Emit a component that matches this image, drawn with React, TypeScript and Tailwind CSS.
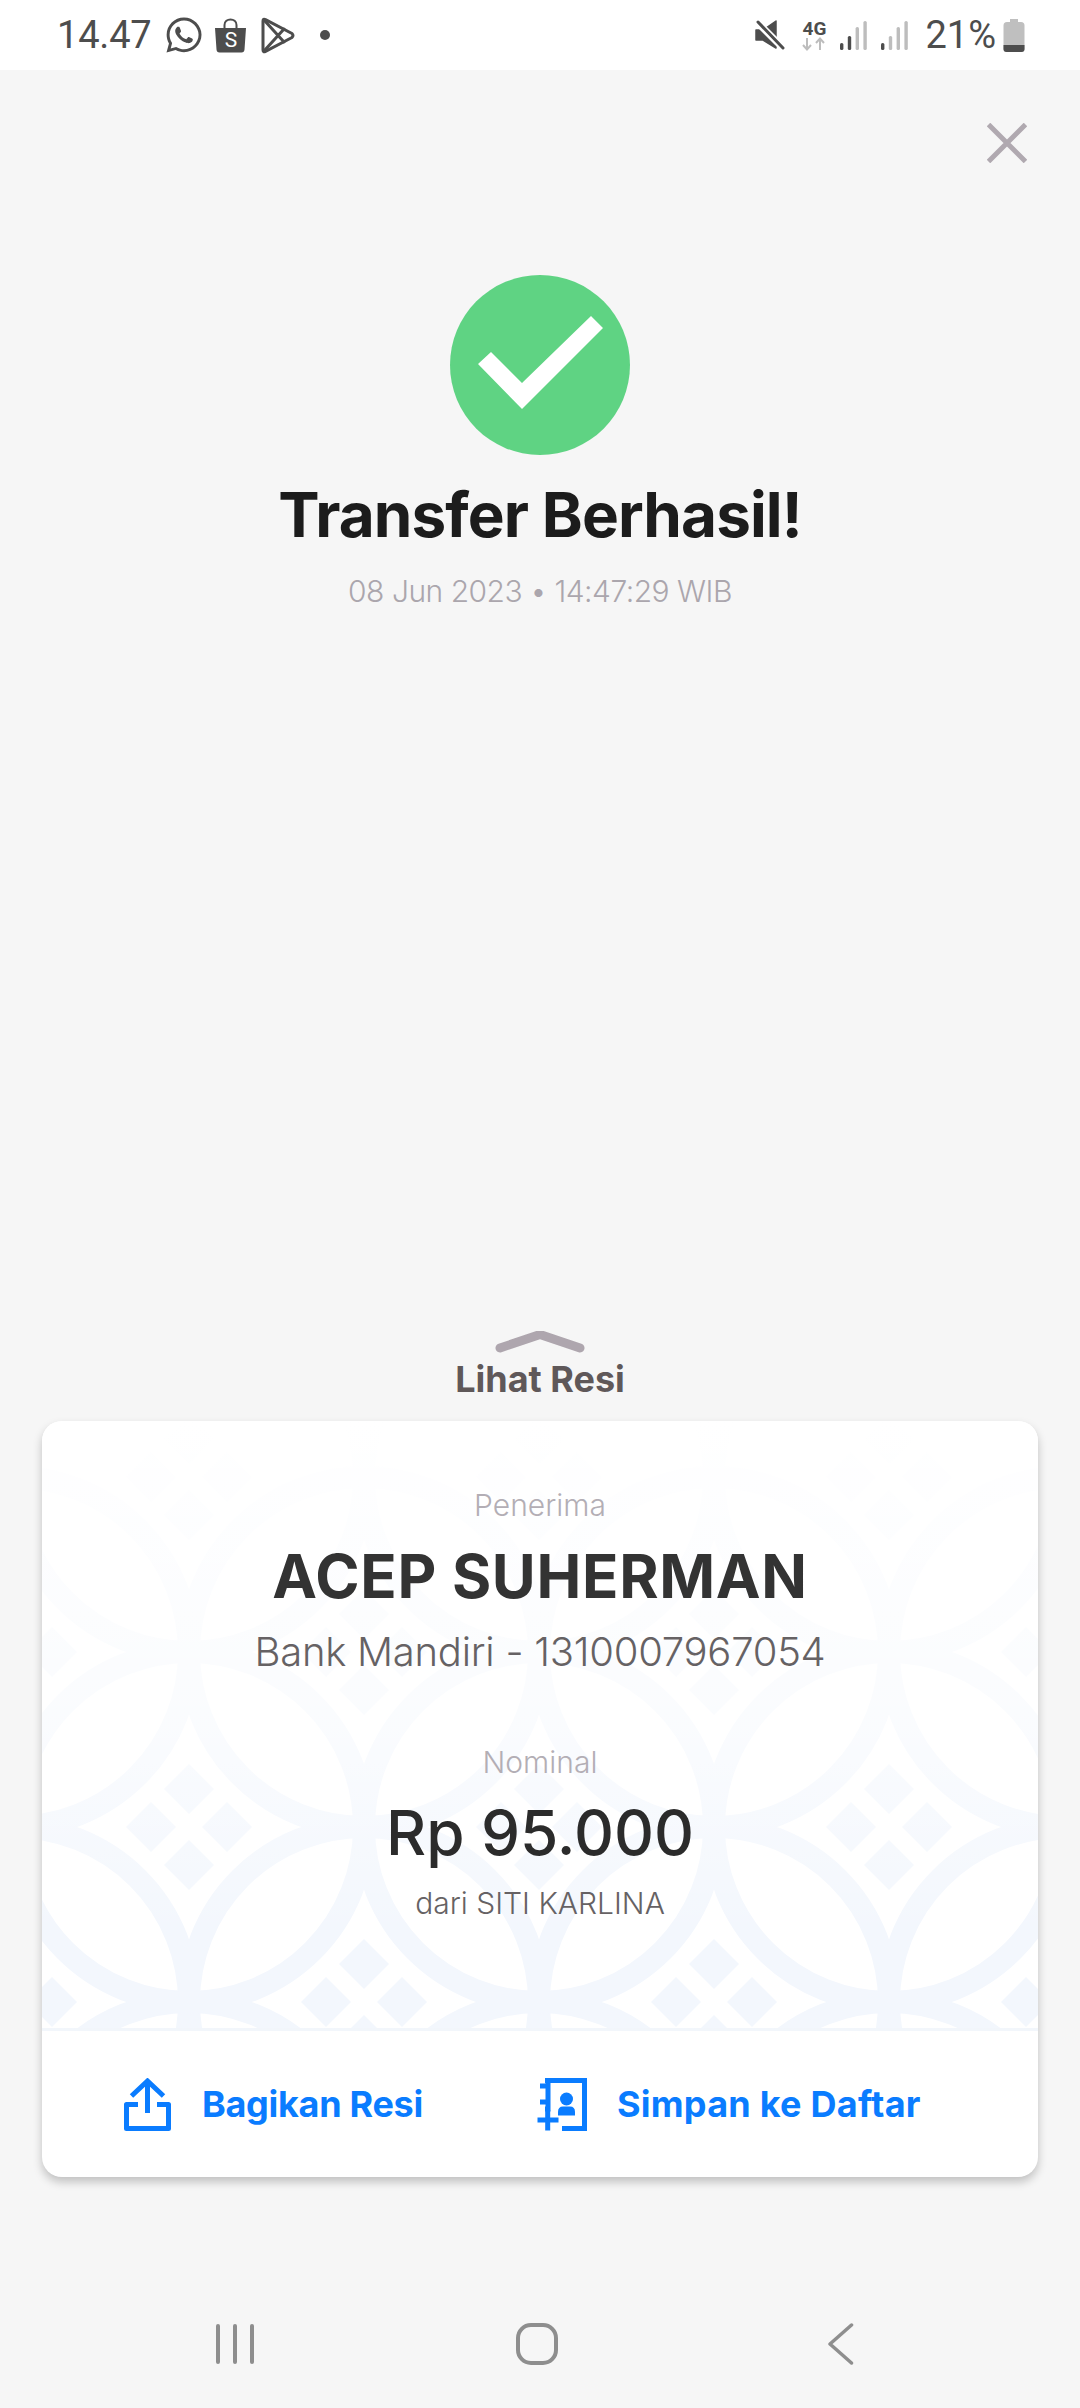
import React from 'react';
import { FaWhatsapp } from 'react-icons/fa';

const STATUS = '#4d4d4d';
const PATTERN = '#f3f7fd';

// kawung pattern: circles sit on a checkerboard, 175px apart
const patternCenters = [
  [147, 56], [497, 56], [847, 56],
  [-28, 231], [322, 231], [672, 231], [1022, 231],
  [147, 406], [497, 406], [847, 406],
  [-28, 581], [322, 581], [672, 581], [1022, 581],
  [147, 756], [497, 756], [847, 756],
];

function Signal({ dark }: { dark: number }) {
  const heights = [7, 14, 23, 29];
  return (
    <svg width="28" height="29" viewBox="0 0 28 29">
      {heights.map((h, i) => (
        <rect key={i} x={i * 7.8} y={29 - h} width="3.4" height={h} rx="1.6" fill={i < dark ? STATUS : '#bdbdbd'} />
      ))}
    </svg>
  );
}

function StatusBar() {
  return (
    <div className="flex h-[70px] items-center bg-white pr-[55px] pl-[57px] font-['Roboto',sans-serif] text-[38px] text-[#4d4d4d]">
      <span className="leading-[44px] tracking-[-0.2px]">14.47</span>
      <FaWhatsapp className="ml-[13px]" size={40} color={STATUS} />
      {/* shopee bag */}
      <div className="relative ml-[11px] h-[35px] w-[31px]">
        <svg width="31" height="35" viewBox="0 0 31 35">
          <path d="M9.5 11 V7 C9.5 -0.5 21.5 -0.5 21.5 7 V11" fill="none" stroke={STATUS} strokeWidth="2" />
          <path d="M0 10 H31 L29.5 31.5 Q29.3 34.5 26.5 34.5 H4.5 Q1.7 34.5 1.5 31.5 Z" fill={STATUS} />
        </svg>
        <span className="absolute inset-x-0 top-[10px] text-center text-[21px] leading-[24px] text-white">S</span>
      </div>
      {/* play store */}
      <svg className="ml-[15px]" width="34" height="37" viewBox="0 0 34 37" fill="none" stroke={STATUS} strokeWidth="3" strokeLinejoin="round" strokeLinecap="round">
        <path d="M2 4 Q2 1.5 4.5 2.7 L31 16.5 Q33 18.5 31 20.5 L4.5 34.3 Q2 35.5 2 33 Z" />
        <path d="M3 3 L23 25 M3 34 L23 12" />
      </svg>
      <span className="ml-[25px] h-[10px] w-[10px] rounded-full bg-[#4d4d4d]" />

      <svg className="ml-auto" width="30" height="30" viewBox="0 0 30 30">
        <path d="M1 10 H8 L21 1 V28 L8 20 H1 Z" fill={STATUS} stroke={STATUS} strokeWidth="1.5" strokeLinejoin="round" />
        <path d="M2 2 L29 29" stroke="#fff" strokeWidth="7" />
        <path d="M3 2 L28 28" stroke={STATUS} strokeWidth="3" strokeLinecap="round" />
      </svg>
      {/* 4G with data arrows */}
      <div className="ml-[16px] flex w-[26px] flex-col items-center">
        <span className="text-[19px] leading-[17px] font-bold">4G</span>
        <svg width="26" height="14" viewBox="0 0 26 14">
          <path d="M6 1 V12 M2 8 L6 12.5 L10 8 M19 13 V2 M15 6 L19 1.5 L23 6" fill="none" stroke="#bdbdbd" strokeWidth="2" />
        </svg>
      </div>
      <span className="ml-[13px]"><Signal dark={2} /></span>
      <span className="ml-[13px]"><Signal dark={1} /></span>
      <span className="ml-[16px] leading-[44px]">21%</span>
      <svg className="ml-[7px]" width="22" height="33" viewBox="0 0 22 33">
        <path d="M7 0 H15 V3 H18 Q21.5 3 21.5 6.5 V30 Q21.5 33 18.5 33 H3.5 Q0.5 33 0.5 30 V6.5 Q0.5 3 4 3 H7 Z" fill="#bfbfbf" />
        <path d="M0.5 26 H21.5 V30 Q21.5 33 18.5 33 H3.5 Q0.5 33 0.5 30 Z" fill={STATUS} />
      </svg>
    </div>
  );
}

function ShareIcon() {
  return (
    <svg width="47" height="53" viewBox="0 0 47 53" fill="none" stroke="#0a7cff" strokeWidth="5">
      <path d="M14 26.5 H2.5 V50.5 H44.5 V26.5 H33" strokeLinejoin="round" />
      <path d="M23.5 3 V35" />
      <path d="M7.5 18 L23.5 3 L39.5 18" />
    </svg>
  );
}

function SaveContactIcon() {
  return (
    <svg width="50" height="53" viewBox="0 0 50 53" fill="none" stroke="#0a7cff" strokeWidth="5">
      <path d="M8 2.5 H47.5 V50.5 H25" />
      <path d="M3 8 H11 V0 M3 24 H11 V8 M11 24 V31 H8" />
      <path d="M0.5 42 H21.5 M10.7 32 V52.5" />
      <circle cx="29.5" cy="21" r="6.5" fill="#0a7cff" stroke="none" />
      <path d="M21 37.5 V34 Q21 28.5 26 28.5 H33 Q38 28.5 38 34 V37.5 Z" fill="#0a7cff" stroke="none" />
    </svg>
  );
}

function CardPattern() {
  return (
    <svg className="absolute inset-0" width="996" height="607" viewBox="0 0 996 607" fill="none">
      {patternCenters.map(([x, y]) => (
        <g key={`${x}-${y}`}>
          <circle cx={x} cy={y} r="175" stroke={PATTERN} strokeWidth="22" />
          {[[0, -38], [38, 0], [0, 38], [-38, 0]].map(([dx, dy]) => (
            <path
              key={`${dx}-${dy}`}
              d={`M${x + dx} ${y + dy - 25} L${x + dx + 25} ${y + dy} L${x + dx} ${y + dy + 25} L${x + dx - 25} ${y + dy} Z`}
              fill={PATTERN}
            />
          ))}
        </g>
      ))}
    </svg>
  );
}

function ReceiptCard() {
  return (
    <div className="mx-[42px] mt-[20px] overflow-hidden rounded-[20px] bg-white shadow-[0_5px_10px_rgba(0,0,0,0.22)]">
      <div className="relative h-[607px] text-center">
        <CardPattern />
        {/* pattern fades out towards the top of the card */}
        <div className="absolute inset-0 bg-gradient-to-b from-white via-white/60 via-50% to-white/0 to-85%" />
        <div className="relative flex flex-col items-center pt-[66px] font-['Inter',sans-serif]">
          <p className="text-[30px] leading-[36px] font-light text-[#b3aeb5]">Penerima</p>
          <p className="mt-[17px] text-[60px] leading-[72px] font-bold tracking-[0.7px] text-[#333333]">ACEP SUHERMAN</p>
          <p className="mt-[16px] text-[40px] leading-[48px] font-light tracking-[-0.25px] text-[#666264]">Bank Mandiri - 1310007967054</p>
          <p className="mt-[68px] text-[30px] leading-[36px] font-light text-[#b3aeb5]">Nominal</p>
          <p className="mt-[17px] text-[62px] leading-[72px] font-medium text-[#2b2b2b]">Rp 95.000</p>
          <p className="mt-[16px] text-[30px] leading-[36px] font-light text-[#666264]">dari SITI KARLINA</p>
        </div>
      </div>
      <div className="h-[3px] bg-[#f2f6fb]" />
      <div className="flex h-[146px] items-center pl-[82px] font-['Inter',sans-serif] text-[36px] leading-[44px] font-bold text-[#0a7cff]">
        <ShareIcon />
        <span className="ml-[31px] tracking-[-0.3px]">Bagikan Resi</span>
        <span className="ml-[114px]"><SaveContactIcon /></span>
        <span className="ml-[30px] tracking-[0.25px]">Simpan ke Daftar</span>
      </div>
    </div>
  );
}

function NavBar() {
  return (
    <div className="mt-[146px] flex items-start pl-[216px]">
      <div className="flex gap-[13px] pt-[1px]">
        <span className="h-[40px] w-[4px] rounded-full bg-[#8e8e8e]" />
        <span className="h-[40px] w-[4px] rounded-full bg-[#8e8e8e]" />
        <span className="h-[40px] w-[4px] rounded-full bg-[#8e8e8e]" />
      </div>
      <span className="ml-[262px] h-[42px] w-[42px] rounded-[15px] border-[4px] border-[#8e8e8e]" />
      <svg className="ml-[270px]" width="26" height="42" viewBox="0 0 26 42" fill="none">
        <path d="M23.5 2 L2 21 L23.5 40" stroke="#8e8e8e" strokeWidth="3.5" strokeLinecap="round" strokeLinejoin="round" />
      </svg>
    </div>
  );
}

export default function App() {
  return (
    <div className="h-[2408px] w-[1080px] overflow-hidden bg-[#f6f6f6]">
      <StatusBar />

      <div className="flex justify-end pt-[53px] pr-[53px]">
        <svg width="40" height="40" viewBox="0 0 40 40" stroke="#b0a9b0" strokeWidth="5">
          <path d="M1.5 1.5 L38.5 38.5 M38.5 1.5 L1.5 38.5" />
        </svg>
      </div>

      <div className="mt-[112px] flex flex-col items-center font-['Inter',sans-serif]">
        <div className="h-[180px] w-[180px] rounded-full bg-[#5fd383]">
          <svg width="180" height="180" viewBox="0 0 180 180">
            <path d="M28 89 L41 77 L72 108 L141 41 L153 53 L72 134 Z" fill="#fff" />
          </svg>
        </div>
        <h1 className="mt-[24px] text-[62px] leading-[72px] font-bold tracking-[-0.9px] text-[#1c1c1c]">Transfer Berhasil!</h1>
        <p className="mt-[22px] text-[30px] leading-[36px] font-light tracking-[-0.5px] text-[#aba6ad]">08 Jun 2023 • 14:47:29 WIB</p>

        <svg className="mt-[722px] mb-[4px]" width="90" height="22" viewBox="0 0 90 22" fill="none">
          <path d="M5 17 L45 3.5 L85 17" stroke="#aea6ae" strokeWidth="9" strokeLinecap="round" />
        </svg>
        <p className="text-[36px] leading-[44px] font-bold text-[#5f5859]">Lihat Resi</p>
      </div>

      <ReceiptCard />
      <NavBar />
    </div>
  );
}
